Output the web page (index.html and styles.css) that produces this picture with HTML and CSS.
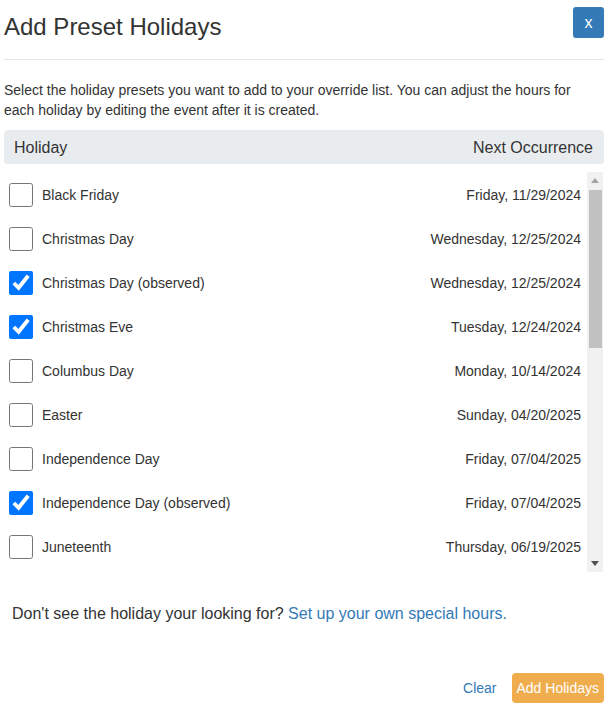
FILE: index.html
```html
<!DOCTYPE html>
<html lang="en">
  <head>
    <meta charset="UTF-8" />
    <meta name="viewport" content="width=device-width, initial-scale=1.0" />
    <title>Add Preset Holidays</title>
    <link rel="stylesheet" href="styles.css">
  </head>
  <body>
    <div class="modal">
      <div class="modal-header">
        <h4 class="modal-title">Add Preset Holidays</h4>
        <button class="btn-close" type="button">x</button>
      </div>

      <p class="intro">
        Select the holiday presets you want to add to your override list. You can adjust the hours for
        each holiday by editing the event after it is created.
      </p>

      <div class="list-head">
        <span>Holiday</span>
        <span>Next Occurrence</span>
      </div>

      <div class="list-wrap">
        <ul class="holiday-list">
          <li><label><input type="checkbox" /> Black Friday</label><span class="date">Friday, 11/29/2024</span></li>
          <li><label><input type="checkbox" /> Christmas Day</label><span class="date">Wednesday, 12/25/2024</span></li>
          <li><label><input type="checkbox" checked /> Christmas Day (observed)</label><span class="date">Wednesday, 12/25/2024</span></li>
          <li><label><input type="checkbox" checked /> Christmas Eve</label><span class="date">Tuesday, 12/24/2024</span></li>
          <li><label><input type="checkbox" /> Columbus Day</label><span class="date">Monday, 10/14/2024</span></li>
          <li><label><input type="checkbox" /> Easter</label><span class="date">Sunday, 04/20/2025</span></li>
          <li><label><input type="checkbox" /> Independence Day</label><span class="date">Friday, 07/04/2025</span></li>
          <li><label><input type="checkbox" checked /> Independence Day (observed)</label><span class="date">Friday, 07/04/2025</span></li>
          <li><label><input type="checkbox" /> Juneteenth</label><span class="date">Thursday, 06/19/2025</span></li>
          <li><label><input type="checkbox" /> Juneteenth (observed)</label><span class="date">Thursday, 06/19/2025</span></li>
          <li><label><input type="checkbox" /> Labor Day</label><span class="date">Monday, 09/01/2025</span></li>
          <li><label><input type="checkbox" /> Martin Luther King Jr. Day</label><span class="date">Monday, 01/20/2025</span></li>
          <li><label><input type="checkbox" /> Memorial Day</label><span class="date">Monday, 05/26/2025</span></li>
          <li><label><input type="checkbox" /> New Year's Day</label><span class="date">Wednesday, 01/01/2025</span></li>
          <li><label><input type="checkbox" /> New Year's Day (observed)</label><span class="date">Wednesday, 01/01/2025</span></li>
          <li><label><input type="checkbox" /> New Year's Eve</label><span class="date">Tuesday, 12/31/2024</span></li>
          <li><label><input type="checkbox" /> Presidents' Day</label><span class="date">Monday, 02/17/2025</span></li>
          <li><label><input type="checkbox" /> Thanksgiving Day</label><span class="date">Thursday, 11/28/2024</span></li>
          <li><label><input type="checkbox" /> Veterans Day</label><span class="date">Tuesday, 11/11/2025</span></li>
          <li><label><input type="checkbox" /> Veterans Day (observed)</label><span class="date">Tuesday, 11/11/2025</span></li>
          <li><label><input type="checkbox" /> Day after Thanksgiving</label><span class="date">Friday, 11/29/2024</span></li>
        </ul>

        <!-- drawn scrollbar, the list's own one is hidden -->
        <div class="scrollbar">
          <span class="scroll-btn">
            <svg width="8" height="5" viewBox="0 0 8 5"><polygon points="4,0 8,5 0,5" fill="#a3a3a3" /></svg>
          </span>
          <div class="scroll-track">
            <div class="scroll-thumb"></div>
          </div>
          <span class="scroll-btn">
            <svg width="8" height="5" viewBox="0 0 8 5"><polygon points="0,0 8,0 4,5" fill="#505050" /></svg>
          </span>
        </div>
      </div>

      <p class="custom-note">
        Don't see the holiday your looking for? <a href="#">Set up your own special hours.</a>
      </p>

      <div class="modal-footer">
        <a href="#" class="link-clear">Clear</a>
        <button class="btn-warning" type="button">Add Holidays</button>
      </div>
    </div>
  </body>
</html>
```

FILE: styles.css
```css
* {
  margin: 0;
  padding: 0;
  box-sizing: border-box;
}
body {
  background-color: #ffffff;
  color: #333333;
  font-family: "Liberation Sans", Arial, sans-serif;
  font-size: 14px;
  line-height: 20px;
}
.modal {
  padding: 0 4px;
}
.modal-header {
  display: flex;
  justify-content: space-between;
  align-items: flex-start;
  height: 60px;
  padding-top: 7px;
  border-bottom: 1px solid #e5e5e5;
}
.modal-title {
  margin-top: 7px;
  font-size: 24px;
  font-weight: normal;
  line-height: 26px;
}
.btn-close {
  width: 31px;
  height: 31px;
  border: none;
  border-radius: 3px;
  background-color: #337ab7;
  color: #ffffff;
  font-family: "Liberation Sans", Arial, sans-serif;
  font-size: 16px;
}
.intro {
  margin-top: 20px;
}
.list-head {
  display: flex;
  justify-content: space-between;
  align-items: center;
  height: 34px;
  margin-top: 10px;
  padding: 1px 11px 0 10px;
  background-color: #e9ecef;
  border-radius: 4px;
  font-size: 16px;
}
.list-wrap {
  display: flex;
  height: 400px;
  margin-top: 8px;
}
.holiday-list {
  flex: 1;
  list-style: none;
  overflow-y: auto;
  scrollbar-width: none;
}
.holiday-list li {
  display: flex;
  justify-content: space-between;
  align-items: center;
  height: 44px;
  padding: 2px 6px 0 5px;
}
.holiday-list label {
  display: flex;
  align-items: center;
  gap: 9px;
}
.holiday-list input {
  width: 24px;
  height: 24px;
  margin: 0;
}
.scrollbar {
  display: flex;
  flex-direction: column;
  width: 16px;
  margin-right: 1px;
  background-color: #f1f1f1;
}
.scroll-btn {
  display: flex;
  justify-content: center;
  align-items: center;
  height: 17px;
}
.scroll-track {
  flex: 1;
  padding: 1px 1px 0 2px;
}
.scroll-thumb {
  height: 158px;
  background-color: #c1c1c1;
}
.custom-note {
  margin-top: 32px;
  padding-left: 8px;
  font-size: 16px;
}
a {
  color: #337ab7;
  text-decoration: none;
}
.modal-footer {
  display: flex;
  justify-content: flex-end;
  align-items: center;
  gap: 15px;
  margin-top: 49px;
}
.btn-warning {
  height: 30px;
  padding: 0 5px;
  border: none;
  border-radius: 4px;
  background-color: #f0ad4e;
  color: #ffffff;
  font-family: "Liberation Sans", Arial, sans-serif;
  font-size: 14px;
}
```
